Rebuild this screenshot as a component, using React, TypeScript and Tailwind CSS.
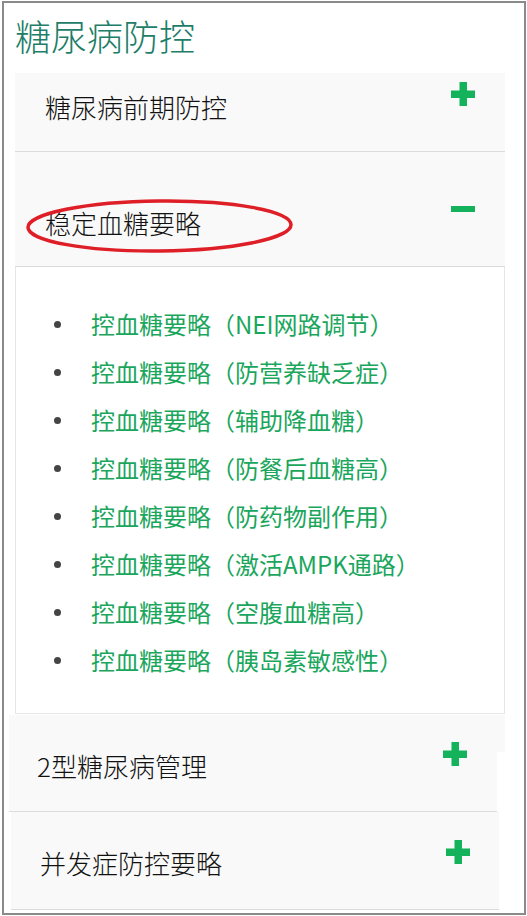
import React from "react";

const font = { fontFamily: '"Noto Sans CJK SC", "Noto Sans", sans-serif' };

function Plus() {
  return (
    <svg width="24" height="24" viewBox="0 0 24 24" className="shrink-0">
      <rect x="8.5" y="0" width="7.5" height="24" fill="#13b25b" />
      <rect x="0" y="8.5" width="24" height="7.5" fill="#13b25b" />
    </svg>
  );
}

function Minus() {
  return (
    <svg width="24" height="6" viewBox="0 0 24 6" className="shrink-0">
      <rect x="0" y="0" width="24" height="6" fill="#13b25b" />
    </svg>
  );
}

const items = [
  "控血糖要略（NEI网路调节）",
  "控血糖要略（防营养缺乏症）",
  "控血糖要略（辅助降血糖）",
  "控血糖要略（防餐后血糖高）",
  "控血糖要略（防药物副作用）",
  "控血糖要略（激活AMPK通路）",
  "控血糖要略（空腹血糖高）",
  "控血糖要略（胰岛素敏感性）",
];

export default function App() {
  return (
    <div className="bg-white w-[527px] h-[916px] overflow-hidden" style={font}>
      <div className="ml-[2px] mt-[1px] w-[524px] h-[914px] border-2 border-[#8a8a8a] bg-white">
        {/* Title */}
        <div className="h-[70px] pt-[12px] pl-[11px]">
          <div className="text-[36px] leading-[40px] font-light text-[#217d67]">糖尿病防控</div>
        </div>

        {/* Panel 1 */}
        <div className="ml-[11px] w-[490px] h-[79px] bg-[#f9f9f9] border-b border-[#dcdcdc] flex justify-between pl-[30px] pr-[30px]">
          <div className="mt-[19px] text-[26px] leading-[30px] font-light text-[#111111]">糖尿病前期防控</div>
          <div className="mt-[9px]">
            <Plus />
          </div>
        </div>

        {/* Panel 2 header */}
        <div className="relative ml-[11px] w-[490px] h-[115px] bg-[#f9f9f9] border-b border-[#dcdcdc] flex justify-between pl-[30px] pr-[30px]">
          <div className="mt-[56px] text-[26px] leading-[30px] font-light text-[#111111]">稳定血糖要略</div>
          <div className="mt-[54px]">
            <Minus />
          </div>
          <svg
            className="absolute left-0 top-0 overflow-visible pointer-events-none"
            width="300"
            height="115"
            viewBox="0 0 300 115"
          >
            <ellipse
              cx="144.5"
              cy="74"
              rx="131.5"
              ry="25"
              fill="none"
              stroke="#de1f27"
              strokeWidth="3.5"
              transform="rotate(-0.6 144.5 74)"
            />
          </svg>
        </div>

        {/* Panel 2 content */}
        <div className="ml-[11px] w-[490px] h-[447px] bg-white border-x border-b border-[#e6e6e6] pt-[33px] pl-[38px]">
          <ul>
            {items.map((t) => (
              <li key={t} className="flex items-center gap-[30px] h-[48px]">
                <span className="w-[7px] h-[7px] rounded-full bg-[#444444] shrink-0" />
                <span className="text-[24px] leading-[48px] text-[#1aa65c]">{t}</span>
              </li>
            ))}
          </ul>
        </div>

        {/* Panel 3 */}
        <div className="mt-[1px] flex items-start">
          <div className="ml-[5px] w-[488px] h-[97px] bg-[#f9f9f9] border-b border-[#dcdcdc] flex justify-between pl-[28px] pr-[30px]">
            <div className="mt-[36px] text-[26px] leading-[30px] font-light text-[#111111]">2型糖尿病管理</div>
            <div className="mt-[27px]">
              <Plus />
            </div>
          </div>
          <div className="w-[8px] h-[37px] bg-[#f9f9f9]" />
        </div>

        {/* Panel 4 */}
        <div className="ml-[7px] w-[488px] h-[98px] bg-[#f9f9f9] border-b border-[#dcdcdc] flex justify-between pl-[29px] pr-[29px]">
          <div className="mt-[36px] text-[26px] leading-[30px] font-light text-[#111111]">并发症防控要略</div>
          <div className="mt-[28px]">
            <Plus />
          </div>
        </div>
      </div>
    </div>
  );
}
